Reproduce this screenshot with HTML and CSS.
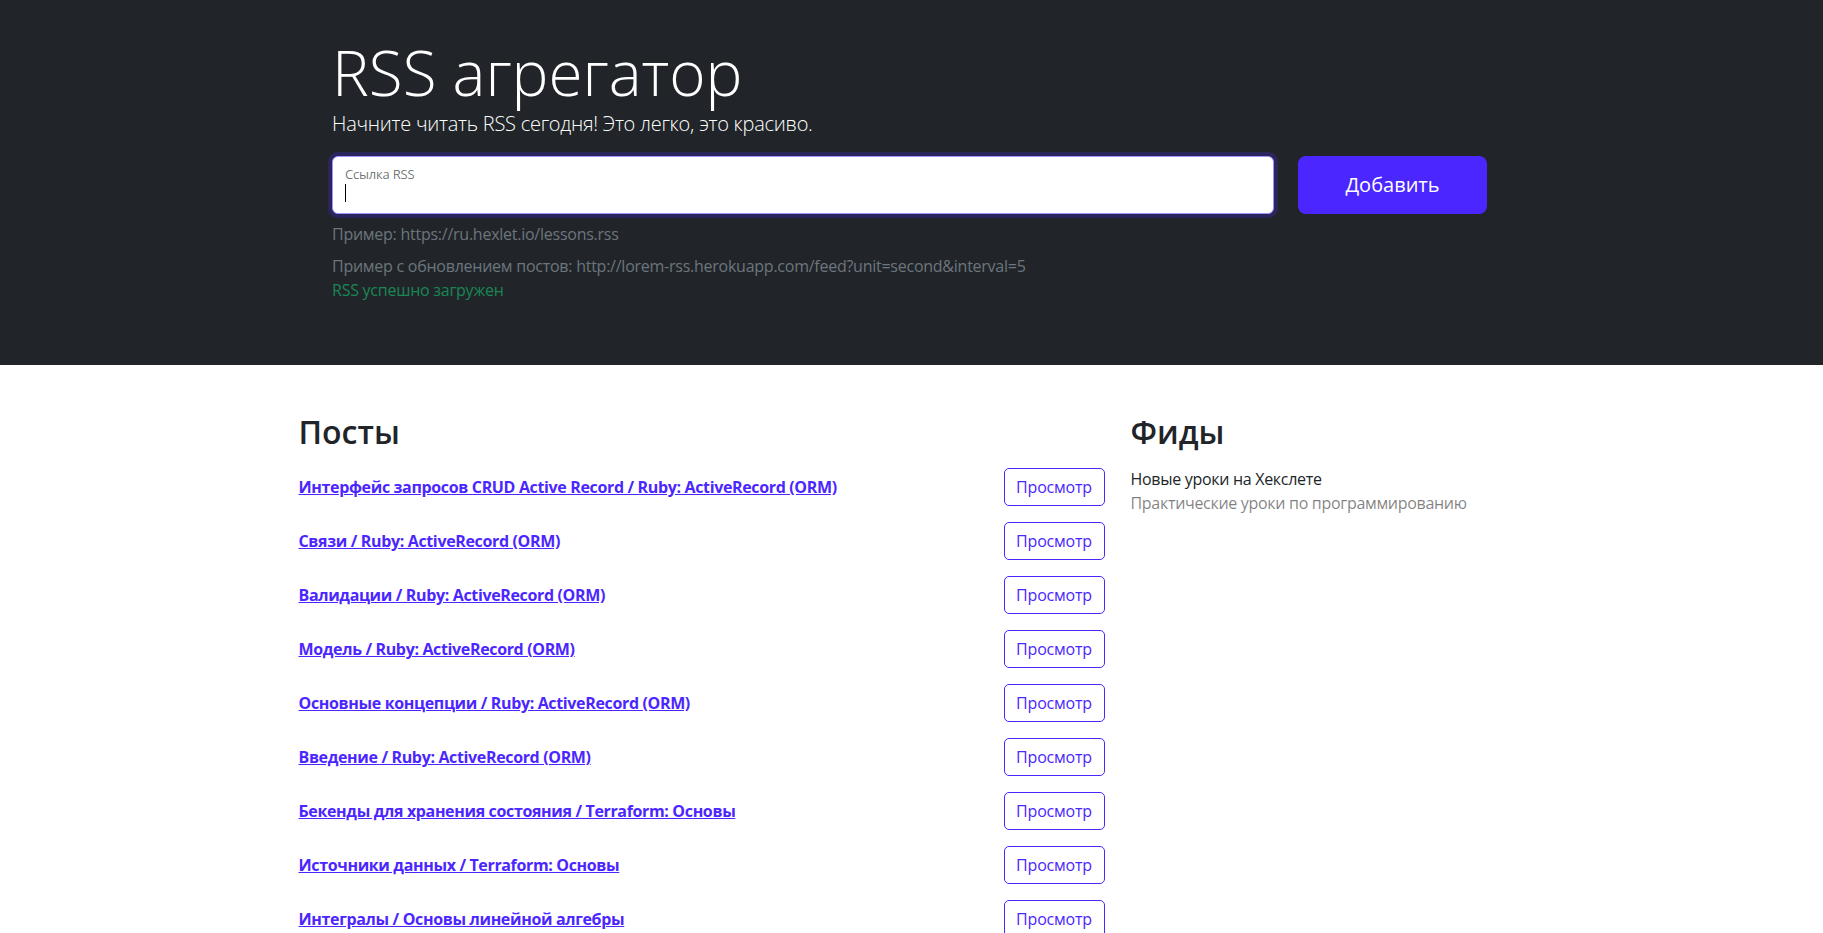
FILE: index.html
```html
<!DOCTYPE html>
<html lang="ru">
<head>
<meta charset="utf-8">
<title>RSS агрегатор</title>
<link rel="stylesheet" href="styles.css">
</head>
<body>
<main class="page">
  <section class="hero">
    <div class="hero-inner">
      <h1 class="hero-title">RSS агрегатор</h1>
      <p class="hero-lead">Начните читать RSS сегодня! Это легко, это красиво.</p>
      <form class="rss-form">
        <div class="field">
          <input class="field-input" type="text" aria-label="url" autocomplete="off">
          <label class="field-label">Ссылка RSS</label>
          <span class="caret"></span>
        </div>
        <button type="button" class="btn-add">Добавить</button>
      </form>
      <p class="hint hint-first">Пример: https://ru.hexlet.io/lessons.rss</p>
      <p class="hint">Пример с обновлением постов: http://lorem-rss.herokuapp.com/feed?unit=second&amp;interval=5</p>
      <p class="feedback">RSS успешно загружен</p>
    </div>
  </section>

  <section class="content">
    <div class="posts">
      <h2 class="section-title">Посты</h2>
      <ul class="post-list">
        <li class="post-item"><a class="post-link" href="#">Интерфейс запросов CRUD Active Record / Ruby: ActiveRecord (ORM)</a><button type="button" class="btn-view">Просмотр</button></li>
        <li class="post-item"><a class="post-link" href="#">Связи / Ruby: ActiveRecord (ORM)</a><button type="button" class="btn-view">Просмотр</button></li>
        <li class="post-item"><a class="post-link" href="#">Валидации / Ruby: ActiveRecord (ORM)</a><button type="button" class="btn-view">Просмотр</button></li>
        <li class="post-item"><a class="post-link" href="#">Модель / Ruby: ActiveRecord (ORM)</a><button type="button" class="btn-view">Просмотр</button></li>
        <li class="post-item"><a class="post-link" href="#">Основные концепции / Ruby: ActiveRecord (ORM)</a><button type="button" class="btn-view">Просмотр</button></li>
        <li class="post-item"><a class="post-link" href="#">Введение / Ruby: ActiveRecord (ORM)</a><button type="button" class="btn-view">Просмотр</button></li>
        <li class="post-item"><a class="post-link" href="#">Бекенды для хранения состояния / Terraform: Основы</a><button type="button" class="btn-view">Просмотр</button></li>
        <li class="post-item"><a class="post-link" href="#">Источники данных / Terraform: Основы</a><button type="button" class="btn-view">Просмотр</button></li>
        <li class="post-item"><a class="post-link" href="#">Интегралы / Основы линейной алгебры</a><button type="button" class="btn-view">Просмотр</button></li>
        <li class="post-item"><a class="post-link" href="#">Производные / Основы линейной алгебры</a><button type="button" class="btn-view">Просмотр</button></li>
      </ul>
    </div>
    <div class="feeds">
      <h2 class="section-title">Фиды</h2>
      <ul class="feed-list">
        <li class="feed-item">
          <h3 class="feed-title">Новые уроки на Хекслете</h3>
          <p class="feed-desc">Практические уроки по программированию</p>
        </li>
      </ul>
    </div>
  </section>
</main>
</body>
</html>
```

FILE: styles.css
```css
* {
  box-sizing: border-box;
}

html, body {
  margin: 0;
  padding: 0;
  background: #ffffff;
}

body {
  font-family: "Open Sans", "Noto Sans", sans-serif;
  font-size: 16px;
  line-height: 24px;
  color: #212529;
}

.hero {
  background: #212529;
  padding: 35px 4px 63px 0;
}

.hero-inner {
  width: 1155px;
  margin: 0 auto;
  color: #ffffff;
}

.hero-title {
  margin: 0;
  font-size: 62px;
  line-height: 74px;
  font-weight: 300;
}

.hero-lead {
  margin: 0 0 17px;
  font-size: 20px;
  line-height: 30px;
  font-weight: 300;
  letter-spacing: -0.25px;
}

.rss-form {
  display: flex;
  gap: 24px;
}

.field {
  position: relative;
  flex: 1;
}

.field-input {
  display: block;
  width: 100%;
  height: 58px;
  margin: 0;
  padding: 0 12px;
  border: 1px solid #a193ff;
  border-radius: 6px;
  background: #ffffff;
  box-shadow: 0 0 0 4px rgba(75, 38, 255, 0.25);
  outline: none;
  font: inherit;
}

.field-label {
  position: absolute;
  left: 13px;
  top: 10px;
  font-size: 13px;
  line-height: 16px;
  letter-spacing: -0.2px;
  color: rgba(33, 37, 41, 0.65);
}

.caret {
  position: absolute;
  left: 13px;
  top: 28px;
  width: 1px;
  height: 18px;
  background: #000000;
}

.btn-add {
  width: 189px;
  height: 58px;
  padding: 0;
  border: 0;
  border-radius: 8px;
  background: #4b26ff;
  color: #ffffff;
  font-family: inherit;
  font-size: 20px;
  line-height: 30px;
}

.hint {
  margin: 8px 0 0;
  color: #6c757d;
  letter-spacing: -0.25px;
}

.feedback {
  margin: 0;
  color: #198754;
  letter-spacing: -0.25px;
}

.content {
  max-width: 1320px;
  margin: 0 auto;
  padding: 48px 49px 48px 47px;
  display: grid;
  grid-template-columns: 808px 392px;
  gap: 24px;
}

.section-title {
  margin: 0 0 9px;
  font-size: 32px;
  line-height: 38px;
  font-weight: 600;
  color: #212529;
}

.post-list,
.feed-list {
  list-style: none;
  margin: 0;
  padding: 0;
}

.post-item {
  display: flex;
  align-items: center;
  justify-content: space-between;
  padding: 8px 2px 8px 0;
}

.post-link {
  font-weight: 700;
  color: #4b26ff;
  text-decoration: underline;
  letter-spacing: -0.35px;
}

.btn-view {
  width: 101px;
  height: 38px;
  padding: 0;
  border: 1px solid #4b26ff;
  border-radius: 5px;
  background: #ffffff;
  color: #4b26ff;
  font-family: inherit;
  font-size: 16px;
  line-height: 24px;
  letter-spacing: -0.2px;
}

.feed-item {
  padding-top: 7px;
}

.feed-title {
  margin: 0;
  font-size: 16px;
  line-height: 24px;
  font-weight: 400;
  letter-spacing: -0.3px;
  color: #212529;
}

.feed-desc {
  margin: 0;
  letter-spacing: -0.3px;
  color: rgba(0, 0, 0, 0.5);
}
```
